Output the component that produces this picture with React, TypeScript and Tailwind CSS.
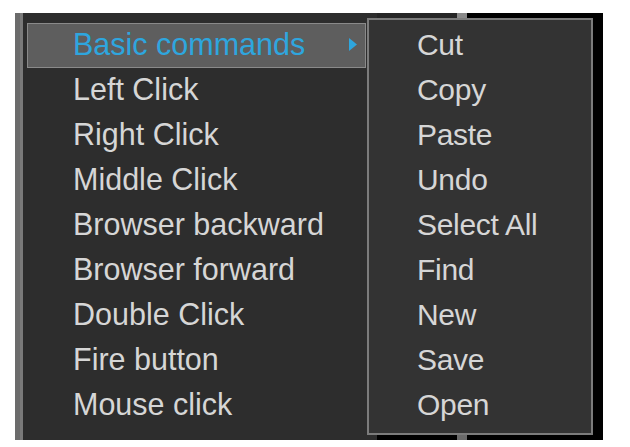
const mainItems = [
  "Basic commands",
  "Left Click",
  "Right Click",
  "Middle Click",
  "Browser backward",
  "Browser forward",
  "Double Click",
  "Fire button",
  "Mouse click",
]

const subItems = ["Cut", "Copy", "Paste", "Undo", "Select All", "Find", "New", "Save", "Open"]

export default function App() {
  return (
    <div className="w-[630px] h-[447px] bg-white pt-[13px] pl-[15px] font-['Liberation_Sans',Arial,sans-serif]">
      <div className="relative flex w-[588px] h-[427px] bg-black">
        {/* main context menu */}
        <div className="flex w-[362px] h-full">
          <div className="w-[5px] h-full bg-[#6b6b6b]" />
          <div className="w-[3px] h-full bg-[#7a7a7a]" />
          <div className="flex-1 bg-[#2d2d2d] pt-[10px] pl-[4px] pr-[11px]">
            {mainItems.map((label, i) => (
              <div
                key={label}
                className={
                  i === 0
                    ? "flex items-center justify-between h-[45px] border border-[#8a8a8a] bg-[#5e5e5e] pl-[45px] pr-[8px]"
                    : "flex items-center justify-between h-[45px] border border-transparent pl-[45px] pr-[8px]"
                }
              >
                <span
                  className={
                    i === 0
                      ? "text-[30.5px] leading-none text-[#2ea6de] -mt-[2px]"
                      : "text-[30.5px] leading-none text-[#d6d6d6] -mt-[2px]"
                  }
                >
                  {label}
                </span>
                {i === 0 && (
                  <svg width="8" height="13" viewBox="0 0 8 13" className="shrink-0 -mt-[2px]">
                    <path d="M0 0 L8 6.5 L0 13 Z" fill="#2ea6de" />
                  </svg>
                )}
              </div>
            ))}
          </div>
        </div>

        {/* window behind the submenu */}
        <div className="flex flex-col justify-between flex-1 h-full">
          <div className="flex w-[90px] h-[5px] bg-[#262626]">
            <div className="flex-1" />
            <div className="w-[10px] bg-[#8a8a8a]" />
          </div>
          <div className="flex w-[90px] h-[5px]">
            <div className="flex-1" />
            <div className="w-[10px] bg-[#6a6a6a]" />
          </div>
        </div>

        {/* submenu */}
        <div className="absolute left-[352px] top-[5px] w-[226px] h-[417px] border-2 border-[#7c7c7c] bg-[#333333] pt-[3px] pl-[48px]">
          {subItems.map((label) => (
            <div key={label} className="flex items-center h-[45px]">
              <span className="text-[30px] leading-none tracking-[-0.3px] text-[#d6d6d6] -mt-[2px]">
                {label}
              </span>
            </div>
          ))}
        </div>
      </div>
    </div>
  )
}
